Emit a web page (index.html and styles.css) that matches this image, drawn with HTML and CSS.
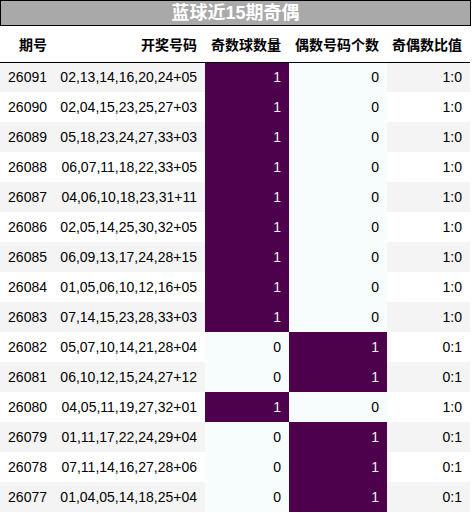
FILE: index.html
```html
<!DOCTYPE html>
<html lang="zh">
<head>
  <meta charset="UTF-8" />
  <title>蓝球近15期奇偶</title>
  <link rel="stylesheet" href="styles.css">
</head>
<body>
  <div class="title">蓝球近15期奇偶</div>
  <table class="stats">
    <colgroup>
      <col class="c-issue">
      <col class="c-nums">
      <col class="c-odd">
      <col class="c-even">
      <col class="c-ratio">
    </colgroup>
    <thead>
      <tr>
        <th>期号</th>
        <th>开奖号码</th>
        <th>奇数球数量</th>
        <th>偶数号码个数</th>
        <th>奇偶数比值</th>
      </tr>
    </thead>
    <tbody>
      <tr><td>26091</td><td>02,13,14,16,20,24+05</td><td class="hi">1</td><td class="lo">0</td><td>1:0</td></tr>
      <tr><td>26090</td><td>02,04,15,23,25,27+03</td><td class="hi">1</td><td class="lo">0</td><td>1:0</td></tr>
      <tr><td>26089</td><td>05,18,23,24,27,33+03</td><td class="hi">1</td><td class="lo">0</td><td>1:0</td></tr>
      <tr><td>26088</td><td>06,07,11,18,22,33+05</td><td class="hi">1</td><td class="lo">0</td><td>1:0</td></tr>
      <tr><td>26087</td><td>04,06,10,18,23,31+11</td><td class="hi">1</td><td class="lo">0</td><td>1:0</td></tr>
      <tr><td>26086</td><td>02,05,14,25,30,32+05</td><td class="hi">1</td><td class="lo">0</td><td>1:0</td></tr>
      <tr><td>26085</td><td>06,09,13,17,24,28+15</td><td class="hi">1</td><td class="lo">0</td><td>1:0</td></tr>
      <tr><td>26084</td><td>01,05,06,10,12,16+05</td><td class="hi">1</td><td class="lo">0</td><td>1:0</td></tr>
      <tr><td>26083</td><td>07,14,15,23,28,33+03</td><td class="hi">1</td><td class="lo">0</td><td>1:0</td></tr>
      <tr><td>26082</td><td>05,07,10,14,21,28+04</td><td class="lo">0</td><td class="hi">1</td><td>0:1</td></tr>
      <tr><td>26081</td><td>06,10,12,15,24,27+12</td><td class="lo">0</td><td class="hi">1</td><td>0:1</td></tr>
      <tr><td>26080</td><td>04,05,11,19,27,32+01</td><td class="hi">1</td><td class="lo">0</td><td>1:0</td></tr>
      <tr><td>26079</td><td>01,11,17,22,24,29+04</td><td class="lo">0</td><td class="hi">1</td><td>0:1</td></tr>
      <tr><td>26078</td><td>07,11,14,16,27,28+06</td><td class="lo">0</td><td class="hi">1</td><td>0:1</td></tr>
      <tr><td>26077</td><td>01,04,05,14,18,25+04</td><td class="lo">0</td><td class="hi">1</td><td>0:1</td></tr>
    </tbody>
  </table>
</body>
</html>
```

FILE: styles.css
```css
* {
  box-sizing: border-box;
  margin: 0;
  padding: 0;
}
body {
  background: #fff;
  font-family: 'Liberation Sans', Arial, 'Noto Sans CJK SC', sans-serif;
  color: #000;
}
.title {
  width: 471px;
  height: 26px;
  line-height: 24px;
  border: 1px solid #000;
  background-color: #a9a9a9;
  color: #fff;
  font-size: 18px;
  font-weight: bold;
  text-align: center;
}
.stats {
  width: 470px;
  table-layout: fixed;
  border-collapse: collapse;
  font-size: 14px;
}
.c-issue { width: 55px; }
.c-nums { width: 150px; }
.c-odd { width: 84px; }
.c-even { width: 98px; }
.c-ratio { width: 83px; }
.stats th {
  height: 36px;
  padding: 0 8px 0 0;
  text-align: right;
  font-weight: bold;
  border-bottom: 1px solid #000;
  white-space: nowrap;
}
.stats td {
  height: 30px;
  padding: 0 8px 0 0;
  text-align: right;
  white-space: nowrap;
}
.stats tbody tr:nth-child(odd) td {
  background-color: #f4f4f4;
}
.stats tbody tr td.hi {
  background-color: #4d004b;
  color: #f1f1f1;
}
.stats tbody tr td.lo {
  background-color: #f7fcfd;
  color: #000;
}
```
